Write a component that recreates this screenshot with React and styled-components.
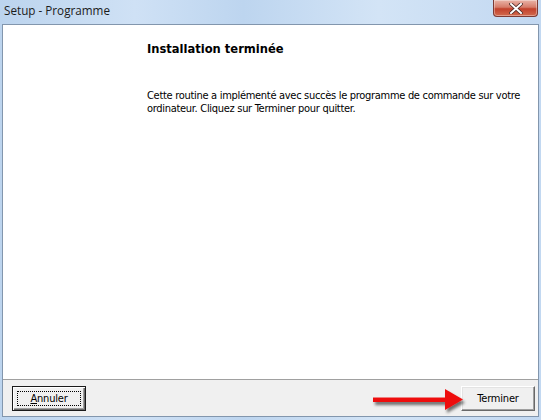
import React from 'react'
import styled, { createGlobalStyle } from 'styled-components'

const Global = createGlobalStyle`
  html, body {
    margin: 0;
    padding: 0;
    background: #c4d9ef;
  }
`

const Window = styled('div')`
  position: relative;
  display: flex;
  flex-direction: column;
  width: 541px;
  height: 420px;
  box-sizing: border-box;
  background: linear-gradient(90deg, #bcd4ee 0%, #cfe1f5 25%, #bdd5ef 45%, #d3e4f6 70%, #c2d8f1 100%);
  overflow: hidden;
`

const TitleBar = styled('div')`
  display: flex;
  justify-content: space-between;
  align-items: flex-start;
  height: 24px;
  flex-shrink: 0;
`

const Title = styled('span')`
  font-family: "Open Sans", "Noto Sans", sans-serif;
  font-size: 11.7px;
  line-height: 20px;
  color: #1b1b1b;
  padding-left: 4px;
`

const CloseButton = styled('div')`
  display: flex;
  align-items: center;
  justify-content: center;
  width: 45px;
  height: 17px;
  margin-right: 3px;
  box-sizing: border-box;
  border: 1px solid #7c3a34;
  border-top: none;
  border-radius: 0 0 4px 4px;
  background: linear-gradient(180deg, #e9b4a8 0%, #d67c6a 45%, #c2412c 55%, #d26a4e 100%);
  box-shadow: inset 0 0 0 1px rgba(255, 255, 255, 0.35);
`

const Frame = styled('div')`
  flex: 1;
  display: flex;
  flex-direction: column;
  margin: 0 2px 3px 2px;
  border: 1px solid #8296ad;
  background: #ffffff;
`

const Content = styled('div')`
  flex: 1;
  padding: 16px 10px 0 144px;
  font-family: "DejaVu Sans Condensed", "DejaVu Sans", sans-serif;
  color: #000;
`

const Heading = styled('div')`
  font-weight: bold;
  font-size: 12.8px;
  line-height: 15px;
`

const Text = styled('p')`
  margin: 33px 0 0 0;
  font-size: 11px;
  line-height: 13px;
  letter-spacing: -0.3px;
  width: 385px;
`

const Footer = styled('div')`
  display: flex;
  justify-content: space-between;
  align-items: flex-start;
  height: 37px;
  box-sizing: border-box;
  padding: 6px 3px 0 9px;
  border-top: 1px solid #a0a0a0;
  background: #f0f0f0;
`

const Button = styled('button')`
  display: flex;
  align-items: center;
  justify-content: center;
  width: ${p => p.$width}px;
  height: 25px;
  padding: 0;
  box-sizing: border-box;
  font-family: "DejaVu Sans Condensed", "DejaVu Sans", sans-serif;
  font-size: 11px;
  letter-spacing: -0.2px;
  color: #000;
  background: #f0f0f0;
  border: 1px solid;
  border-color: #ffffff #696969 #696969 #ffffff;
  box-shadow: inset -1px -1px 0 #a0a0a0, inset 1px 1px 0 #e3e3e3;

  ${p => p.$focused && `
    border: 1px solid #1a1a1a;
    box-shadow: inset 1px 1px 0 #ffffff, inset -1px -1px 0 #696969, inset -2px -2px 0 #a0a0a0;
  `}
`

const FocusRing = styled('span')`
  display: flex;
  align-items: center;
  justify-content: center;
  width: calc(100% - 8px);
  height: calc(100% - 8px);
  border: 1px dotted #000;
  box-sizing: border-box;
`

const Arrow = styled('svg')`
  position: absolute;
  left: 370px;
  top: 386px;
`

const App = () => (
  <Window>
    <Global />
    <TitleBar>
      <Title>Setup - Programme</Title>
      <CloseButton>
        <svg width="14" height="11" viewBox="0 0 14 11">
          <path d="M2 1 L12 10 M12 1 L2 10" stroke="#4a2a26" strokeWidth="3.6" strokeLinecap="square" />
          <path d="M2 1 L12 10 M12 1 L2 10" stroke="#ffffff" strokeWidth="2" strokeLinecap="square" />
        </svg>
      </CloseButton>
    </TitleBar>
    <Frame>
      <Content>
        <Heading>Installation terminée</Heading>
        <Text>
          Cette routine a implémenté avec succès le programme de commande sur votre ordinateur. Cliquez sur Terminer pour quitter.
        </Text>
      </Content>
      <Footer>
        <Button $width={74} $focused>
          <FocusRing><span><u>A</u>nnuler</span></FocusRing>
        </Button>
        <Button $width={74}>Terminer</Button>
      </Footer>
    </Frame>
    <Arrow width="100" height="30" viewBox="0 0 100 30">
      <defs>
        <filter id="sh" x="-20%" y="-40%" width="140%" height="180%">
          <feGaussianBlur in="SourceAlpha" stdDeviation="1.6" />
          <feOffset dx="2" dy="3" result="b" />
          <feComponentTransfer><feFuncA type="linear" slope="0.55" /></feComponentTransfer>
          <feMerge><feMergeNode /><feMergeNode in="SourceGraphic" /></feMerge>
        </filter>
      </defs>
      <path d="M3 11.5 L75 11.5 L75 3 L93 13.5 L75 24 L75 16 L3 16 Z" fill="#ee1111" filter="url(#sh)" />
    </Arrow>
  </Window>
)

export default App
